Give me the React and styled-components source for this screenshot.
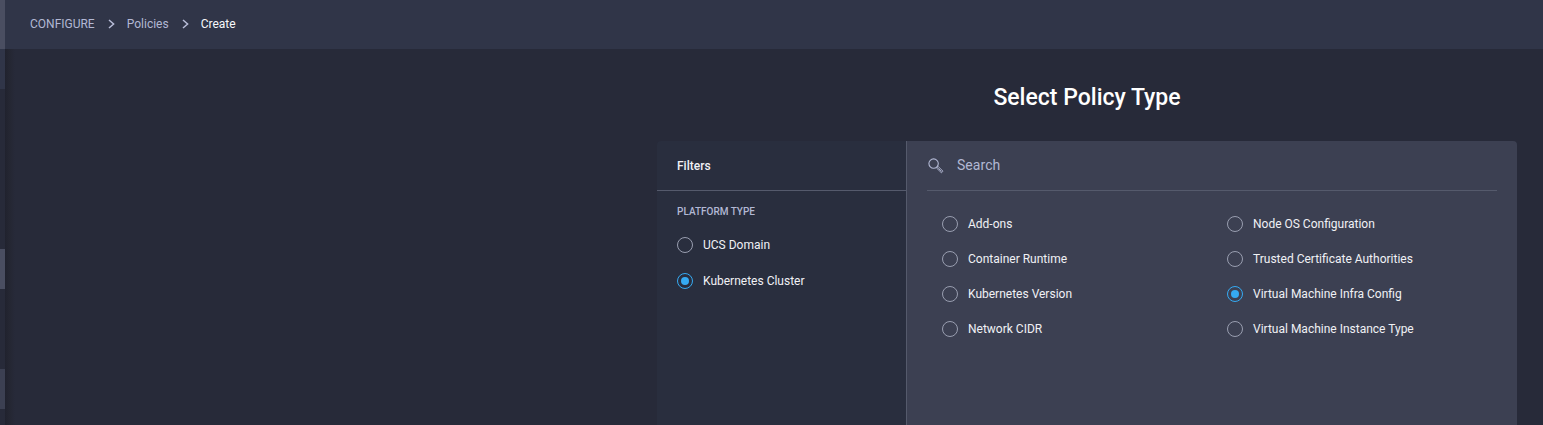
import React from "react";
import styled, { createGlobalStyle } from "styled-components";

const Global = createGlobalStyle`
  * { box-sizing: border-box; }
  html, body { margin: 0; height: 425px; overflow: hidden; background: #272a39; }
  body { font-family: Roboto, "Liberation Sans", sans-serif; font-size: 12px; color: #f0f1f5; }
`;
const Shell = styled.div`
  display: flex;
  width: 1543px;
  height: 425px;
  overflow: hidden;
  background: #272a39;
`;
const Rail = styled.nav`
  flex: 0 0 5px;
  display: flex;
  flex-direction: column;
`;
const RailItem = styled.div`
  flex: 0 0 ${(p) => p.$h}px;
  background: ${(p) => p.$tone};
`;
const Page = styled.div`
  flex: 1;
  display: flex;
  flex-direction: column;
`;
const TopBar = styled.header`
  flex: 0 0 49px;
  display: flex;
  align-items: center;
  padding: 0 0 1px 25px;
  background: #303548;
`;
const Crumb = styled.span`
  line-height: 16px;
  color: ${(p) => (p.$current ? "#f7f8fa" : "#b2b8d4")};
`;
const Chevron = styled.svg`
  width: 8px;
  height: 10px;
  margin: 0 11px 0 13px;
`;
const Body = styled.main`
  flex: 1;
  display: flex;
  flex-direction: column;
  align-items: flex-end;
  padding: 33px 26px 0 0;
  background: linear-gradient(to right, #20222e 0, #242632 4px, #272a39 10px);
`;
const Title = styled.h1`
  width: 860px;
  margin: 0 0 27px;
  font-size: 23px;
  font-weight: 500;
  line-height: 32px;
  text-align: center;
  color: #fff;
`;
const Panel = styled.section`
  flex: 1;
  display: flex;
  width: 860px;
  border-radius: 4px 4px 0 0;
  overflow: hidden;
`;
const Filters = styled.aside`
  flex: 0 0 250px;
  border-right: 1px solid #555a6c;
  background: #292e3e;
`;
const FiltersHeading = styled.h2`
  height: 50px;
  margin: 0;
  padding-left: 20px;
  border-bottom: 1px solid #555a6c;
  font-size: 12px;
  font-weight: 500;
  line-height: 50px;
`;
const GroupLabel = styled.h3`
  margin: 13px 0 17px 20px;
  font-size: 10px;
  font-weight: 500;
  line-height: 16px;
  color: #b2b8d4;
`;
const FilterList = styled.div`
  display: flex;
  flex-direction: column;
  gap: 20px;
  padding-left: 20px;
`;
const Content = styled.div`
  flex: 1;
  padding: 0 20px;
  background: #3c4052;
`;
const SearchRow = styled.div`
  display: flex;
  align-items: center;
  gap: 13px;
  height: 50px;
  padding: 0 0 1px 1px;
  border-bottom: 1px solid #555a6c;
  font-size: 14px;
  letter-spacing: 0.05px;
  color: #b2b8d4;
`;
const SearchIcon = styled.svg`
  width: 16px;
  height: 16px;
  margin-top: 2px;
`;
const PolicyGrid = styled.div`
  display: grid;
  grid-template: repeat(4, 16px) / 285px 1fr;
  grid-auto-flow: column;
  row-gap: 19px;
  padding: 25px 0 0 15px;
`;
const Option = styled.label`
  display: flex;
  align-items: center;
  gap: 10px;
  height: 16px;
  line-height: 16px;
  white-space: nowrap;
`;
const Ring = styled.span`
  display: grid;
  place-items: center;
  width: 16px;
  height: 16px;
  border: 1px solid ${(p) => (p.$on ? "#35aaf2" : "#999eb0")};
  border-radius: 50%;
  &::after {
    content: "";
    width: 8px;
    height: 8px;
    border-radius: 50%;
    background: ${(p) => (p.$on ? "#35aaf2" : "transparent")};
  }
`;

const Radio = ({ label, on }) => (
  <Option>
    <Ring $on={on} />
    <span>{label}</span>
  </Option>
);
const Separator = () => (
  <Chevron viewBox="0 0 8 10" fill="none" stroke="#b8bdd8" strokeWidth="1.5">
    <path d="M1 1 L5.6 5 L1 9" />
  </Chevron>
);

const rail = [[49, "#4a4e61"], [40, "#303548"], [160, "#272a39"], [40, "#4a4e61"], [80, "#272a39"], [40, "#3c4052"], [16, "#272a39"]];
const policies = [
  "Add-ons", "Container Runtime", "Kubernetes Version", "Network CIDR",
  "Node OS Configuration", "Trusted Certificate Authorities",
  "Virtual Machine Infra Config", "Virtual Machine Instance Type",
];

export default function App() {
  return (
    <Shell>
      <Global />
      <Rail>{rail.map(([h, tone], i) => <RailItem key={i} $h={h} $tone={tone} />)}</Rail>
      <Page>
        <TopBar>
          <Crumb>CONFIGURE</Crumb>
          <Separator />
          <Crumb>Policies</Crumb>
          <Separator />
          <Crumb $current>Create</Crumb>
        </TopBar>
        <Body>
          <Title>Select Policy Type</Title>
          <Panel>
            <Filters>
              <FiltersHeading>Filters</FiltersHeading>
              <GroupLabel>PLATFORM TYPE</GroupLabel>
              <FilterList>
                <Radio label="UCS Domain" />
                <Radio label="Kubernetes Cluster" on />
              </FilterList>
            </Filters>
            <Content>
              <SearchRow>
                <SearchIcon viewBox="0 0 16 16" fill="none" stroke="#b2b8d4">
                  <circle cx="5.6" cy="5.6" r="4.7" strokeWidth="1.1" />
                  <path d="M9 9 L10.5 8.8 L15 13.2 L13.4 14.8 L8.8 10.3 Z M10.3 10.3 L13.6 13.5" strokeWidth="0.9" />
                </SearchIcon>
                <span>Search</span>
              </SearchRow>
              <PolicyGrid>
                {policies.map((p) => <Radio key={p} label={p} on={p === "Virtual Machine Infra Config"} />)}
              </PolicyGrid>
            </Content>
          </Panel>
        </Body>
      </Page>
    </Shell>
  );
}
